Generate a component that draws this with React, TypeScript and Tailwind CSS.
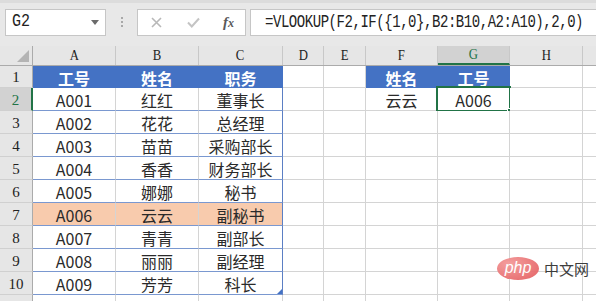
import React from "react";

type Col = { k: string; w: string };
const cols: Col[] = [
  { k: "A", w: "w-[83px]" },
  { k: "B", w: "w-[83px]" },
  { k: "C", w: "w-[84px]" },
  { k: "D", w: "w-[41px]" },
  { k: "E", w: "w-[42px]" },
  { k: "F", w: "w-[72px]" },
  { k: "G", w: "w-[72px]" },
  { k: "H", w: "w-[73px]" },
  { k: "", w: "w-[80px]" },
];

const table: string[][] = [
  ["工号", "姓名", "职务"],
  ["A001", "红红", "董事长"],
  ["A002", "花花", "总经理"],
  ["A003", "苗苗", "采购部长"],
  ["A004", "香香", "财务部长"],
  ["A005", "娜娜", "秘书"],
  ["A006", "云云", "副秘书"],
  ["A007", "青青", "副部长"],
  ["A008", "丽丽", "副经理"],
  ["A009", "芳芳", "科长"],
];

const formula = "=VLOOKUP(F2,IF({1,0},B2:B10,A2:A10),2,0)";

const cjk = "font-['Noto_Sans_CJK_SC',sans-serif]";

function Cell({ r, c }: { r: number; c: number }) {
  const col = cols[c];
  let text = "";
  let bg = "bg-white";
  let color = "text-[#2a2a2a]";
  let border = "border-r border-b border-r-[#d4d4d4] border-b-[#d4d4d4]";
  let weight = "font-normal";
  const inTable = r >= 1 && r <= 10 && c <= 2;
  if (inTable) {
    text = table[r - 1][c];
    if (r === 1) {
      bg = "bg-[#4472c4]";
      color = "text-white";
      weight = "font-bold";
      border = "border-r border-b border-r-[#4472c4] border-b-[#4472c4]";
    } else {
      if (r === 7) bg = "bg-[#f8cbad]";
      border = c === 2
        ? "border-r border-b border-r-[#5b7fc4] border-b-[#7a98d0]"
        : "border-r border-b border-r-[#d4d4d4] border-b-[#7a98d0]";
    }
  }
  if (r === 1 && (c === 5 || c === 6)) {
    text = c === 5 ? "姓名" : "工号";
    bg = "bg-[#4472c4]";
    color = "text-white";
    weight = "font-bold";
    border = "border-r border-b border-r-[#4472c4] border-b-[#4472c4]";
  }
  if (r === 2 && c === 5) text = "云云";
  if (r === 2 && c === 6) text = "A006";
  const selected = r === 2 && c === 6;
  const tri = r === 10 && c === 2;
  return (
    <div
      className={`${col.w} shrink-0 h-full ${bg} ${border} ${color} ${weight} ${cjk} text-[16px] leading-none flex items-center justify-center pt-[2px] relative`}
    >
      {text}
      {selected && (
        <>
          <div className="absolute left-[-2px] top-[-2px] right-[-2px] bottom-[-2px] border-2 border-[#217346]" />
          <div className="absolute right-[-4px] bottom-[-4px] w-[6px] h-[6px] bg-[#217346] border border-white" />
        </>
      )}
      {tri && (
        <svg className="absolute right-0 bottom-0" width="5" height="5" viewBox="0 0 5 5">
          <path d="M5 0 L5 5 L0 5 Z" fill="#4472c4" />
        </svg>
      )}
    </div>
  );
}

export default function App() {
  const rows = Array.from({ length: 11 }, (_, i) => i + 1);
  return (
    <div className="w-[596px] h-[301px] overflow-hidden bg-white relative">
      {/* formula bar */}
      <div className="h-[46px] bg-[#e8e8e8] border-t-[3px] border-t-[#dcdcdc] flex items-start pt-[6px]">
        <div className="ml-[5px] w-[101px] h-[27px] bg-white border border-[#c6c6c6] flex items-center pl-[6px] pr-[6px] shrink-0">
          <span className="font-['Liberation_Mono',monospace] text-[15px] text-[#222] scale-y-[1.2]">G2</span>
          <div className="flex-1" />
          <svg width="8" height="5" viewBox="0 0 8 5">
            <path d="M0 0 L8 0 L4 5 Z" fill="#6b6b6b" />
          </svg>
        </div>
        <div className="ml-[15px] mt-[8px] flex flex-col gap-[2px] shrink-0">
          <div className="w-[2px] h-[2px] bg-[#a8a8a8]" />
          <div className="w-[2px] h-[2px] bg-[#a8a8a8]" />
          <div className="w-[2px] h-[2px] bg-[#a8a8a8]" />
        </div>
        <div className="ml-[14px] w-[109px] h-[27px] bg-white border border-[#c6c6c6] flex items-center shrink-0">
          <svg className="ml-[13px]" width="11" height="11" viewBox="0 0 11 11">
            <path d="M1 1 L10 10 M10 1 L1 10" stroke="#b8b8b8" strokeWidth="1.6" />
          </svg>
          <svg className="ml-[25px]" width="13" height="11" viewBox="0 0 13 11">
            <path d="M1 5.5 L4.8 9.5 L12 1.5" stroke="#c4c4c4" strokeWidth="2" fill="none" />
          </svg>
          <span className="ml-[23px] font-['Liberation_Serif',serif] italic font-bold text-[15px] text-[#5a5a5a]">
            f<span className="text-[12px]">x</span>
          </span>
        </div>
        <div className="ml-[4px] flex-1 mr-[-4px] h-[27px] bg-white border border-[#c6c6c6] flex items-center pl-[14px] overflow-hidden">
          <span className="font-['Liberation_Mono',monospace] text-[14px] tracking-[-0.45px] text-[#222] scale-y-[1.25] whitespace-nowrap">
            {formula}
          </span>
        </div>
      </div>

      {/* column headers */}
      <div className="flex h-[20px] bg-[#e6e6e6] border-b border-[#ababab]">
        <div className="w-[33px] shrink-0 h-full border-r border-[#ababab] relative">
          <svg className="absolute right-[3px] bottom-[3px]" width="12" height="12" viewBox="0 0 12 12">
            <path d="M12 0 L12 12 L0 12 Z" fill="#b4b4b4" />
          </svg>
        </div>
        {cols.map((col, i) => {
          const sel = col.k === "G";
          return (
            <div
              key={i}
              className={`${col.w} shrink-0 h-full flex items-center justify-center font-['Liberation_Serif',serif] text-[15px] leading-none border-r border-[#c8c8c8] ${
                sel ? "bg-[#d2d2d2] text-[#217346] border-b-2 border-b-[#217346]" : "text-[#222]"
              }`}
            >
              {col.k && <span className="scale-x-[0.85] inline-block">{col.k}</span>}
            </div>
          );
        })}
      </div>

      {/* rows */}
      {rows.map((r) => (
        <div key={r} className={`flex ${r === 1 ? "h-[22px]" : "h-[23px]"}`}>
          <div
            className={`w-[33px] shrink-0 h-full flex items-end justify-center pb-[2px] font-['Liberation_Serif',serif] text-[15px] leading-none border-b border-[#d0d0d0] ${
              r === 2
                ? "bg-[#d2d2d2] text-[#217346] border-r-2 border-r-[#217346]"
                : "bg-[#e6e6e6] text-[#222] border-r border-r-[#ababab]"
            }`}
          >
            {r <= 10 ? r : ""}
          </div>
          {cols.map((_, c) => (
            <Cell key={c} r={r} c={c} />
          ))}
        </div>
      ))}

      {/* watermark */}
      <div className="absolute left-[497px] top-[257px] flex items-center opacity-95">
        <div className="w-[42px] h-[23px] rounded-[50%] bg-[radial-gradient(ellipse_at_30%_30%,#f49a9a,#e35a5c)] flex items-center justify-center">
          <span className="font-['Liberation_Sans',sans-serif] italic text-[16px] leading-none text-white mb-[1px]">php</span>
        </div>
        <span className={`ml-[5px] ${cjk} text-[15px] leading-none text-[#333]`}>中文网</span>
      </div>
    </div>
  );
}
